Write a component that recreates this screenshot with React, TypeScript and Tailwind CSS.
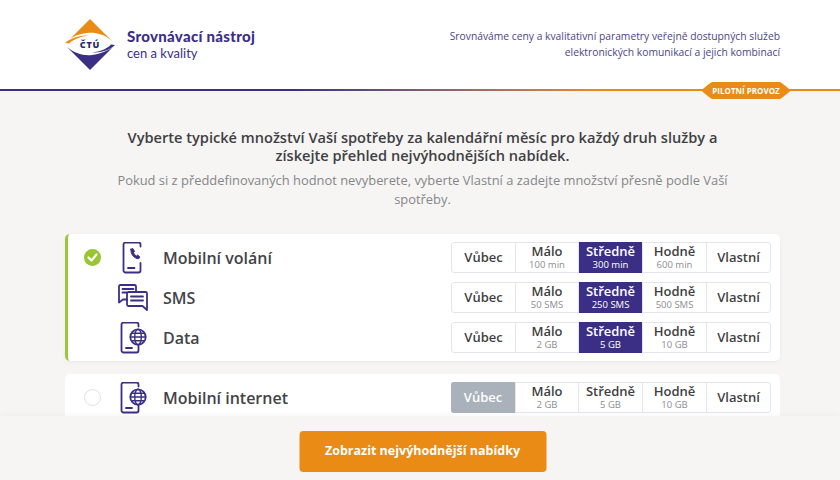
// Icon drawings
function PhoneCallIcon() {
    return (
        <svg width="22" height="32" viewBox="0 0 22 32" fill="none" stroke="#3b2f85" strokeWidth="1.800" strokeLinecap="round" strokeLinejoin="round">
            <path d="M18.500 21v7.500a2 2 0 0 1-2 2h-13a2 2 0 0 1-2-2v-26a2 2 0 0 1 2-2h13a2 2 0 0 1 2 2v2" />
            <path d="M6 26h6.500" />
            <path d="M9 7.500l1.800-1 1.800 3-1.100 1c.5 1.500 1.500 2.700 3 3.500l1.200-1 2.300 2.200-1.300 1.500c-4.500.2-8.500-5-7.700-9.700z" fill="#3b2f85" strokeWidth="1" />
        </svg>
    );
}

function SmsIcon() {
    return (
        <svg width="30" height="27" viewBox="0 0 30 27" fill="none" stroke="#3b2f85" strokeWidth="1.800" strokeLinecap="round" strokeLinejoin="round">
            <path d="M9 15.500H5l-4 3V2.500A1.500 1.500 0 0 1 2.500 1h14A1.500 1.500 0 0 1 18 2.500V8" />
            <path d="M4.500 5h11M4.500 8.500h4" />
            <path d="M10.500 8H27.500A1.500 1.500 0 0 1 29 9.500V26l-4.500-4H10.500A1.500 1.500 0 0 1 9 20.500v-11A1.500 1.500 0 0 1 10.500 8z" />
            <path d="M13 12.500h12M13 16.500h12" />
        </svg>
    );
}

function PhoneGlobeIcon() {
    return (
        <svg width="27" height="32" viewBox="0 0 27 32" fill="none" stroke="#3b2f85" strokeWidth="1.800" strokeLinecap="round" strokeLinejoin="round">
            <path d="M18.500 23v5.500a2 2 0 0 1-2 2h-13a2 2 0 0 1-2-2v-26a2 2 0 0 1 2-2h13a2 2 0 0 1 2 2v2" />
            <path d="M6 26h6" />
            <circle cx="18" cy="15" r="7.700" />
            <ellipse cx="18" cy="15" rx="3.300" ry="7.700" strokeWidth="1.400" />
            <path d="M10.500 15h15M11.700 11.200h12.600M11.700 18.800h12.600" strokeWidth="1.400" />
        </svg>
    );
}

function Logo() {
    return (
        <svg width="50" height="51" viewBox="0 0 50 51" fill="none">
            <path d="M25 0L48 23C40 15 30 13 22 14C13 15 6 18 2 23z" fill="#e98b14" />
            <path d="M25 51L2 28C9 34 18 37 27 36C36 35 44 31 48 28z" fill="#3b2f85" />
            <path d="M0 24C8 17 19 16 27 16.500C19 16.500 10 19 4 24.500z" fill="#e98b14" />
            <path d="M50 26C43 33 32 34 24 33.500C32 33.500 41 31 46 25.500z" fill="#3b2f85" />
            <text x="25" y="29" textAnchor="middle" fontSize="9" fontWeight="800" letterSpacing="0.800" fill="#2f2a6b" fontFamily="'Open Sans', sans-serif">ČTÚ</text>
        </svg>
    );
}

type Option = { label: string; sub?: string };

// cell widths follow the reference, they are not quite even
const CELL_WIDTHS = ["w-[64px]", "w-[63px]", "w-[64px]", "w-[64px]", "w-[63px]"];

function optionsFor(a: string, b: string, c: string): Option[] {
    return [
        { label: "Vůbec" },
        { label: "Málo", sub: a },
        { label: "Středně", sub: b },
        { label: "Hodně", sub: c },
        { label: "Vlastní" },
    ];
}

function Selector({ options, active }: { options: Option[]; active: number }) {
    return (
        <div className="flex h-[31px] w-[320px] shrink-0 rounded-[3px] border border-[#e3e6ea] bg-white">
            {options.map((o, i) => {
                const on = i === active;
                let cls = "text-[#3f3f44]";
                let width = CELL_WIDTHS[i];
                if (on && active === 0) {
                    cls = "bg-[#a9b2ba] text-white -my-px -ml-px rounded-l-[3px]";
                    width = "w-[65px]";
                } else if (on) {
                    cls = "bg-[#3b2f85] text-white -my-px";
                }
                return (
                    <div
                        key={o.label}
                        className={`${width} shrink-0 flex flex-col items-center justify-center border-r border-[#e3e6ea] last:border-r-0 ${cls}`}
                    >
                        <span className="text-[13px] leading-[15px] font-semibold">{o.label}</span>
                        {o.sub && (
                            <span className={`text-[9.500px] leading-[12px] ${on ? "text-white" : "text-[#8b8d91]"}`}>{o.sub}</span>
                        )}
                    </div>
                );
            })}
        </div>
    );
}

function ServiceRow({ icon, name, options, active }: { icon: React.ReactNode; name: string; options: Option[]; active: number }) {
    return (
        <div className="flex items-center h-[31px]">
            <div className="w-[36px] flex justify-center">{icon}</div>
            <span className="ml-[12px] flex-1 text-[16px] font-semibold text-[#434348]">{name}</span>
            <Selector options={options} active={active} />
        </div>
    );
}

export default function App() {
    return (
        <div className="h-[480px] w-[840px] overflow-hidden flex flex-col bg-[#f6f5f3] font-['Open_Sans',sans-serif]">
            {/* Header */}
            <header className="relative h-[91px] shrink-0 bg-white">
                <div className="flex items-start justify-between pl-[65px] pr-[60px] pt-[19px]">
                    <div className="flex items-center">
                        <Logo />
                        <div className="ml-[12px] text-[#3b2f85]">
                            <div className="font-['Lato',sans-serif] text-[15px] tracking-[0.3px] leading-[18px] font-black">Srovnávací nástroj</div>
                            <div className="font-['Lato',sans-serif] text-[13px] leading-[17px]">cen a kvality</div>
                        </div>
                    </div>
                    <p className="pt-[9px] text-right text-[10.300px] leading-[16px] text-[#4d4489]">
                        Srovnáváme ceny a kvalitativní parametry veřejně dostupných služeb
                        <br />
                        elektronických komunikací a jejich kombinací
                    </p>
                </div>
                <div className="absolute left-0 right-0 bottom-0 h-[2px] bg-gradient-to-r from-[#3b2f85] from-[35%] to-[#ee8a12] to-[72%]" />
                <div className="absolute left-[701px] top-[82px] h-[17px] w-[90px] flex items-center justify-center bg-[#e98b14] text-[8px] font-bold text-white [clip-path:polygon(0_50%,8px_2px,11px_0,calc(100%-11px)_0,calc(100%-8px)_2px,100%_50%,calc(100%-8px)_calc(100%-2px),calc(100%-11px)_100%,11px_100%,8px_calc(100%-2px))]">
                    PILOTNÍ PROVOZ
                </div>
            </header>

            {/* Main */}
            <main className="flex-1 min-h-0 overflow-hidden">
                <div className="ml-[65px] w-[715px] pt-[37px] px-[45px] text-center">
                    <h1 className="text-[14.600px] leading-[18px] font-semibold text-[#3f3f44]">
                        Vyberte typické množství Vaší spotřeby za kalendářní měsíc pro každý druh služby a získejte přehled nejvýhodnějších nabídek.
                    </h1>
                    <p className="mt-[7px] text-[12.900px] leading-[19px] text-[#85868a]">
                        Pokud si z předdefinovaných hodnot nevyberete, vyberte Vlastní a zadejte množství přesně podle Vaší spotřeby.
                    </p>
                </div>

                <div className="ml-[65px] mt-[25px] w-[715px]">
                    <section className="flex items-start rounded-[5px] border-l-[3px] border-[#9ac63c] bg-white shadow-[0_1px_4px_rgba(0,0,0,0.05)] h-[127px] pt-[8px] pr-[9px]">
                        <div className="ml-[16px] mt-[7px] flex h-[17px] w-[17px] shrink-0 items-center justify-center rounded-full bg-[#97c534]">
                            <svg width="11" height="9" viewBox="0 0 11 9" fill="none" stroke="#fff" strokeWidth="2.200" strokeLinecap="round" strokeLinejoin="round">
                                <path d="M1.500 4.500l3 3 5-6" />
                            </svg>
                        </div>
                        <div className="ml-[14px] flex flex-1 flex-col gap-[9px]">
                            <ServiceRow icon={<PhoneCallIcon />} name="Mobilní volání" options={optionsFor("100 min", "300 min", "600 min")} active={2} />
                            <ServiceRow icon={<SmsIcon />} name="SMS" options={optionsFor("50 SMS", "250 SMS", "500 SMS")} active={2} />
                            <ServiceRow icon={<PhoneGlobeIcon />} name="Data" options={optionsFor("2 GB", "5 GB", "10 GB")} active={2} />
                        </div>
                    </section>

                    <section className="mt-[13px] flex items-start rounded-[5px] bg-white h-[60px] pt-[8px] pr-[9px] border-l-[3px] border-transparent">
                        <div className="ml-[16px] mt-[7px] h-[17px] w-[17px] shrink-0 rounded-full border border-[#dfe1e4]" />
                        <div className="ml-[14px] flex-1">
                            <ServiceRow icon={<PhoneGlobeIcon />} name="Mobilní internet" options={optionsFor("2 GB", "5 GB", "10 GB")} active={0} />
                        </div>
                    </section>
                </div>
            </main>

            {/* Footer */}
            <footer className="relative flex h-[64px] shrink-0 items-start justify-center bg-[#f6f5f3] pt-[15px] shadow-[0_-2px_6px_rgba(0,0,0,0.03)]">
                <button className="h-[41px] w-[247px] translate-x-[2.500px] rounded-[4px] bg-[#e98b14] text-[12.500px] font-bold text-white">
                    Zobrazit nejvýhodnější nabídky
                </button>
            </footer>
        </div>
    );
}
